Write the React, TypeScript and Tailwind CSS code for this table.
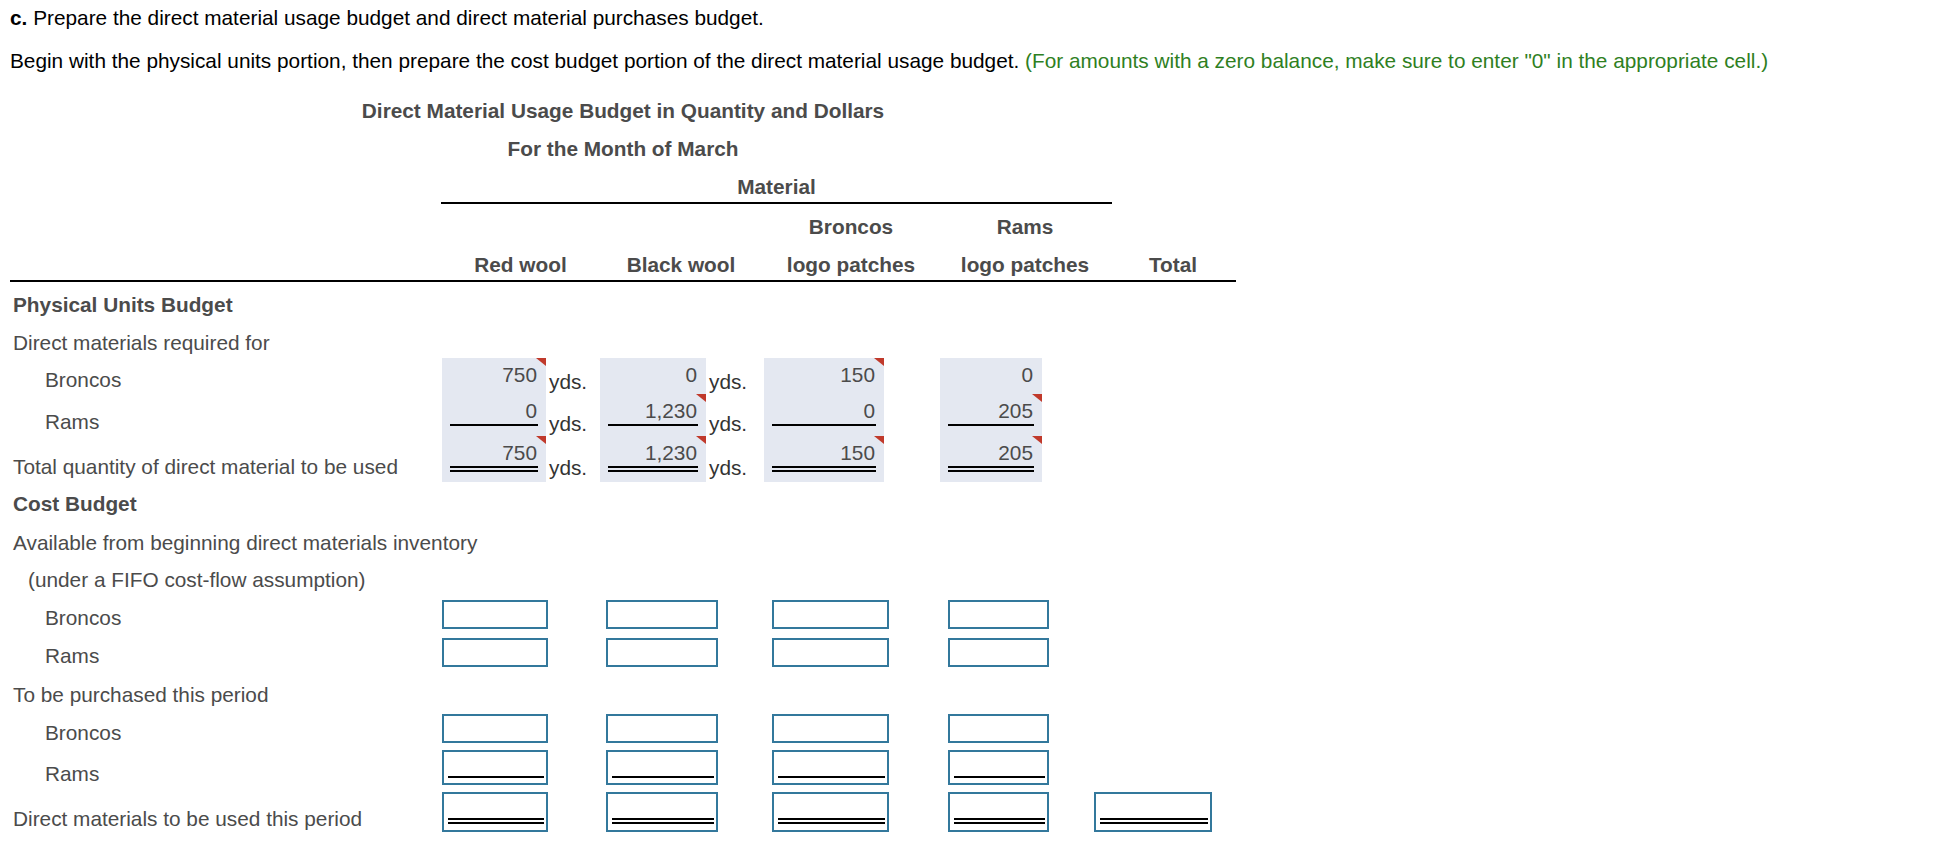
import React from "react";

// physical units: which cells have the little red marker
interface PhysCell {
  value: string;
  flag: boolean;
}

const physRows: { label: string; cells: PhysCell[]; line: "none" | "single" | "double" }[] = [
  {
    label: "Broncos",
    cells: [
      { value: "750", flag: true },
      { value: "0", flag: false },
      { value: "150", flag: true },
      { value: "0", flag: false },
    ],
    line: "none",
  },
  {
    label: "Rams",
    cells: [
      { value: "0", flag: false },
      { value: "1,230", flag: true },
      { value: "0", flag: false },
      { value: "205", flag: true },
    ],
    line: "single",
  },
  {
    label: "Total quantity of direct material to be used",
    cells: [
      { value: "750", flag: true },
      { value: "1,230", flag: true },
      { value: "150", flag: true },
      { value: "205", flag: true },
    ],
    line: "double",
  },
];

function Flag() {
  return (
    <span className="absolute top-0 right-0 w-0 h-0 border-t-[8px] border-l-[10px] border-t-[#c0392b] border-l-transparent" />
  );
}

function PhysBox({ cell, line, width }: { cell: PhysCell; line: string; width: string }) {
  return (
    <div className={`relative self-stretch bg-[#e4e8f1] px-[8px] pt-[4px] ${width}`}>
      {cell.flag && <Flag />}
      <div className="text-right pr-[1px] text-[#4b4b4b]">{cell.value}</div>
      {line === "single" && <div className="mt-[1px] h-[2px] bg-black" />}
      {line === "double" && <div className="mt-[1px] h-[6px] border-y-2 border-black" />}
    </div>
  );
}

function InputBox({ width, line }: { width: string; line?: "single" | "double" }) {
  const h = line === "double" ? "h-[40px]" : line === "single" ? "h-[35px]" : "h-[29px]";
  return (
    <div
      className={`mb-[2px] flex flex-col justify-end border-2 border-[#33789c] bg-white pl-[4px] pr-[2px] ${width} ${h} ${
        line === "double" ? "pb-[6px]" : "pb-[5px]"
      }`}
    >
      {line === "single" && <div className="h-[2px] bg-black" />}
      {line === "double" && <div className="h-[6px] border-y-2 border-black" />}
    </div>
  );
}

function InputRow({
  label,
  indent,
  line,
  total,
  height,
  pb,
}: {
  label: string;
  indent: string;
  line?: "single" | "double";
  total?: boolean;
  height: string;
  pb: string;
}) {
  return (
    <div className={`flex items-end ${height}`}>
      <div className={`w-[431px] shrink-0 ${indent} ${pb}`}>{label}</div>
      <div className="ml-[1px]">
        <InputBox width="w-[106px]" line={line} />
      </div>
      <div className="ml-[58px]">
        <InputBox width="w-[112px]" line={line} />
      </div>
      <div className="ml-[54px]">
        <InputBox width="w-[117px]" line={line} />
      </div>
      <div className="ml-[59px]">
        <InputBox width="w-[101px]" line={line} />
      </div>
      {total && (
        <div className="ml-[45px]">
          <InputBox width="w-[118px]" line={line} />
        </div>
      )}
    </div>
  );
}

function TextRow({ label, height, pb, bold, indent }: { label: string; height: string; pb: string; bold?: boolean; indent?: string }) {
  return (
    <div className={`flex items-end ${height}`}>
      <div className={`${pb} ${indent ?? "pl-[3px]"} ${bold ? "font-bold" : ""}`}>{label}</div>
    </div>
  );
}

export default function App() {
  const physHeights = ["h-[36px]", "h-[42px]", "h-[46px]"];
  const labelPb = ["pb-[2px]", "pb-[2px]", "pb-[3px]"];
  const ydsPb = ["pb-[0px]", "pb-[0px]", "pb-[2px]"];

  return (
    <div className="min-h-screen bg-white font-['Liberation_Sans',Arial,sans-serif] text-[20.8px] leading-[25px]">
      <div className="pl-[10px] pt-[5px]">
        <p className="text-black">
          <span className="font-bold">c.</span> Prepare the direct material usage budget and direct material purchases budget.
        </p>
        <p className="mt-[17.5px] text-black">
          Begin with the physical units portion, then prepare the cost budget portion of the direct material usage budget.{" "}
          <span className="text-[#2f7f1f]">(For amounts with a zero balance, make sure to enter "0" in the appropriate cell.)</span>
        </p>

        <div className="w-[1226px] text-[#4b4b4b]">
          {/* heading */}
          <div className="mt-[25.5px] text-center font-bold">Direct Material Usage Budget in Quantity and Dollars</div>
          <div className="mt-[12.5px] text-center font-bold">For the Month of March</div>
          <div className="mt-[13.5px] ml-[431px] w-[671px] text-center font-bold">Material</div>
          <div className="mt-[3px] ml-[431px] w-[671px] h-[2px] bg-black" />

          <div className="mt-[9.5px] flex font-bold">
            <div className="w-[431px] shrink-0" />
            <div className="w-[159px]" />
            <div className="w-[162px]" />
            <div className="w-[178px] text-center">Broncos</div>
            <div className="w-[170px] text-center">Rams</div>
          </div>
          <div className="mt-[13px] flex font-bold">
            <div className="w-[431px] shrink-0" />
            <div className="w-[159px] text-center">Red wool</div>
            <div className="w-[162px] text-center">Black wool</div>
            <div className="w-[178px] text-center">logo patches</div>
            <div className="w-[170px] text-center">logo patches</div>
            <div className="w-[126px] text-center">Total</div>
          </div>
          <div className="mt-[3.5px] h-[2px] bg-black" />

          {/* physical units */}
          <TextRow label="Physical Units Budget" height="h-[39px]" pb="pb-[4px]" bold />
          <TextRow label="Direct materials required for" height="h-[37px]" pb="pb-[3px]" />
          {physRows.map((row, i) => (
            <div key={row.label} className={`flex items-end ${physHeights[i]}`}>
              <div className={`w-[431px] shrink-0 ${labelPb[i]} ${i < 2 ? "pl-[35px]" : "pl-[3px]"}`}>{row.label}</div>
              <div className="ml-[1px] flex self-stretch">
                <PhysBox cell={row.cells[0]} line={row.line} width="w-[104px]" />
              </div>
              <div className={`w-[54px] self-end pl-[3px] text-[#333] ${ydsPb[i]}`}>yds.</div>
              <PhysBox cell={row.cells[1]} line={row.line} width="w-[106px]" />
              <div className={`w-[58px] self-end pl-[3px] text-[#333] ${ydsPb[i]}`}>yds.</div>
              <PhysBox cell={row.cells[2]} line={row.line} width="w-[120px]" />
              <div className="w-[56px]" />
              <PhysBox cell={row.cells[3]} line={row.line} width="w-[102px]" />
            </div>
          ))}

          {/* cost budget */}
          <TextRow label="Cost Budget" height="h-[40px]" pb="pb-[6px]" bold />
          <TextRow label="Available from beginning direct materials inventory" height="h-[37px]" pb="pb-[4px]" />
          <TextRow label="(under a FIFO cost-flow assumption)" height="h-[37px]" pb="pb-[4px]" indent="pl-[18px]" />
          <InputRow label="Broncos" indent="pl-[35px]" height="h-[35px]" pb="pb-[1px]" />
          <InputRow label="Rams" indent="pl-[35px]" height="h-[38px]" pb="pb-[1px]" />
          <TextRow label="To be purchased this period" height="h-[41px]" pb="pb-[3px]" />
          <InputRow label="Broncos" indent="pl-[35px]" height="h-[35px]" pb="pb-[0px]" />
          <InputRow label="Rams" indent="pl-[35px]" height="h-[42px]" pb="pb-[1px]" line="single" />
          <InputRow label="Direct materials to be used this period" indent="pl-[3px]" height="h-[47px]" pb="pb-[3px]" line="double" total />
        </div>
      </div>
    </div>
  );
}
